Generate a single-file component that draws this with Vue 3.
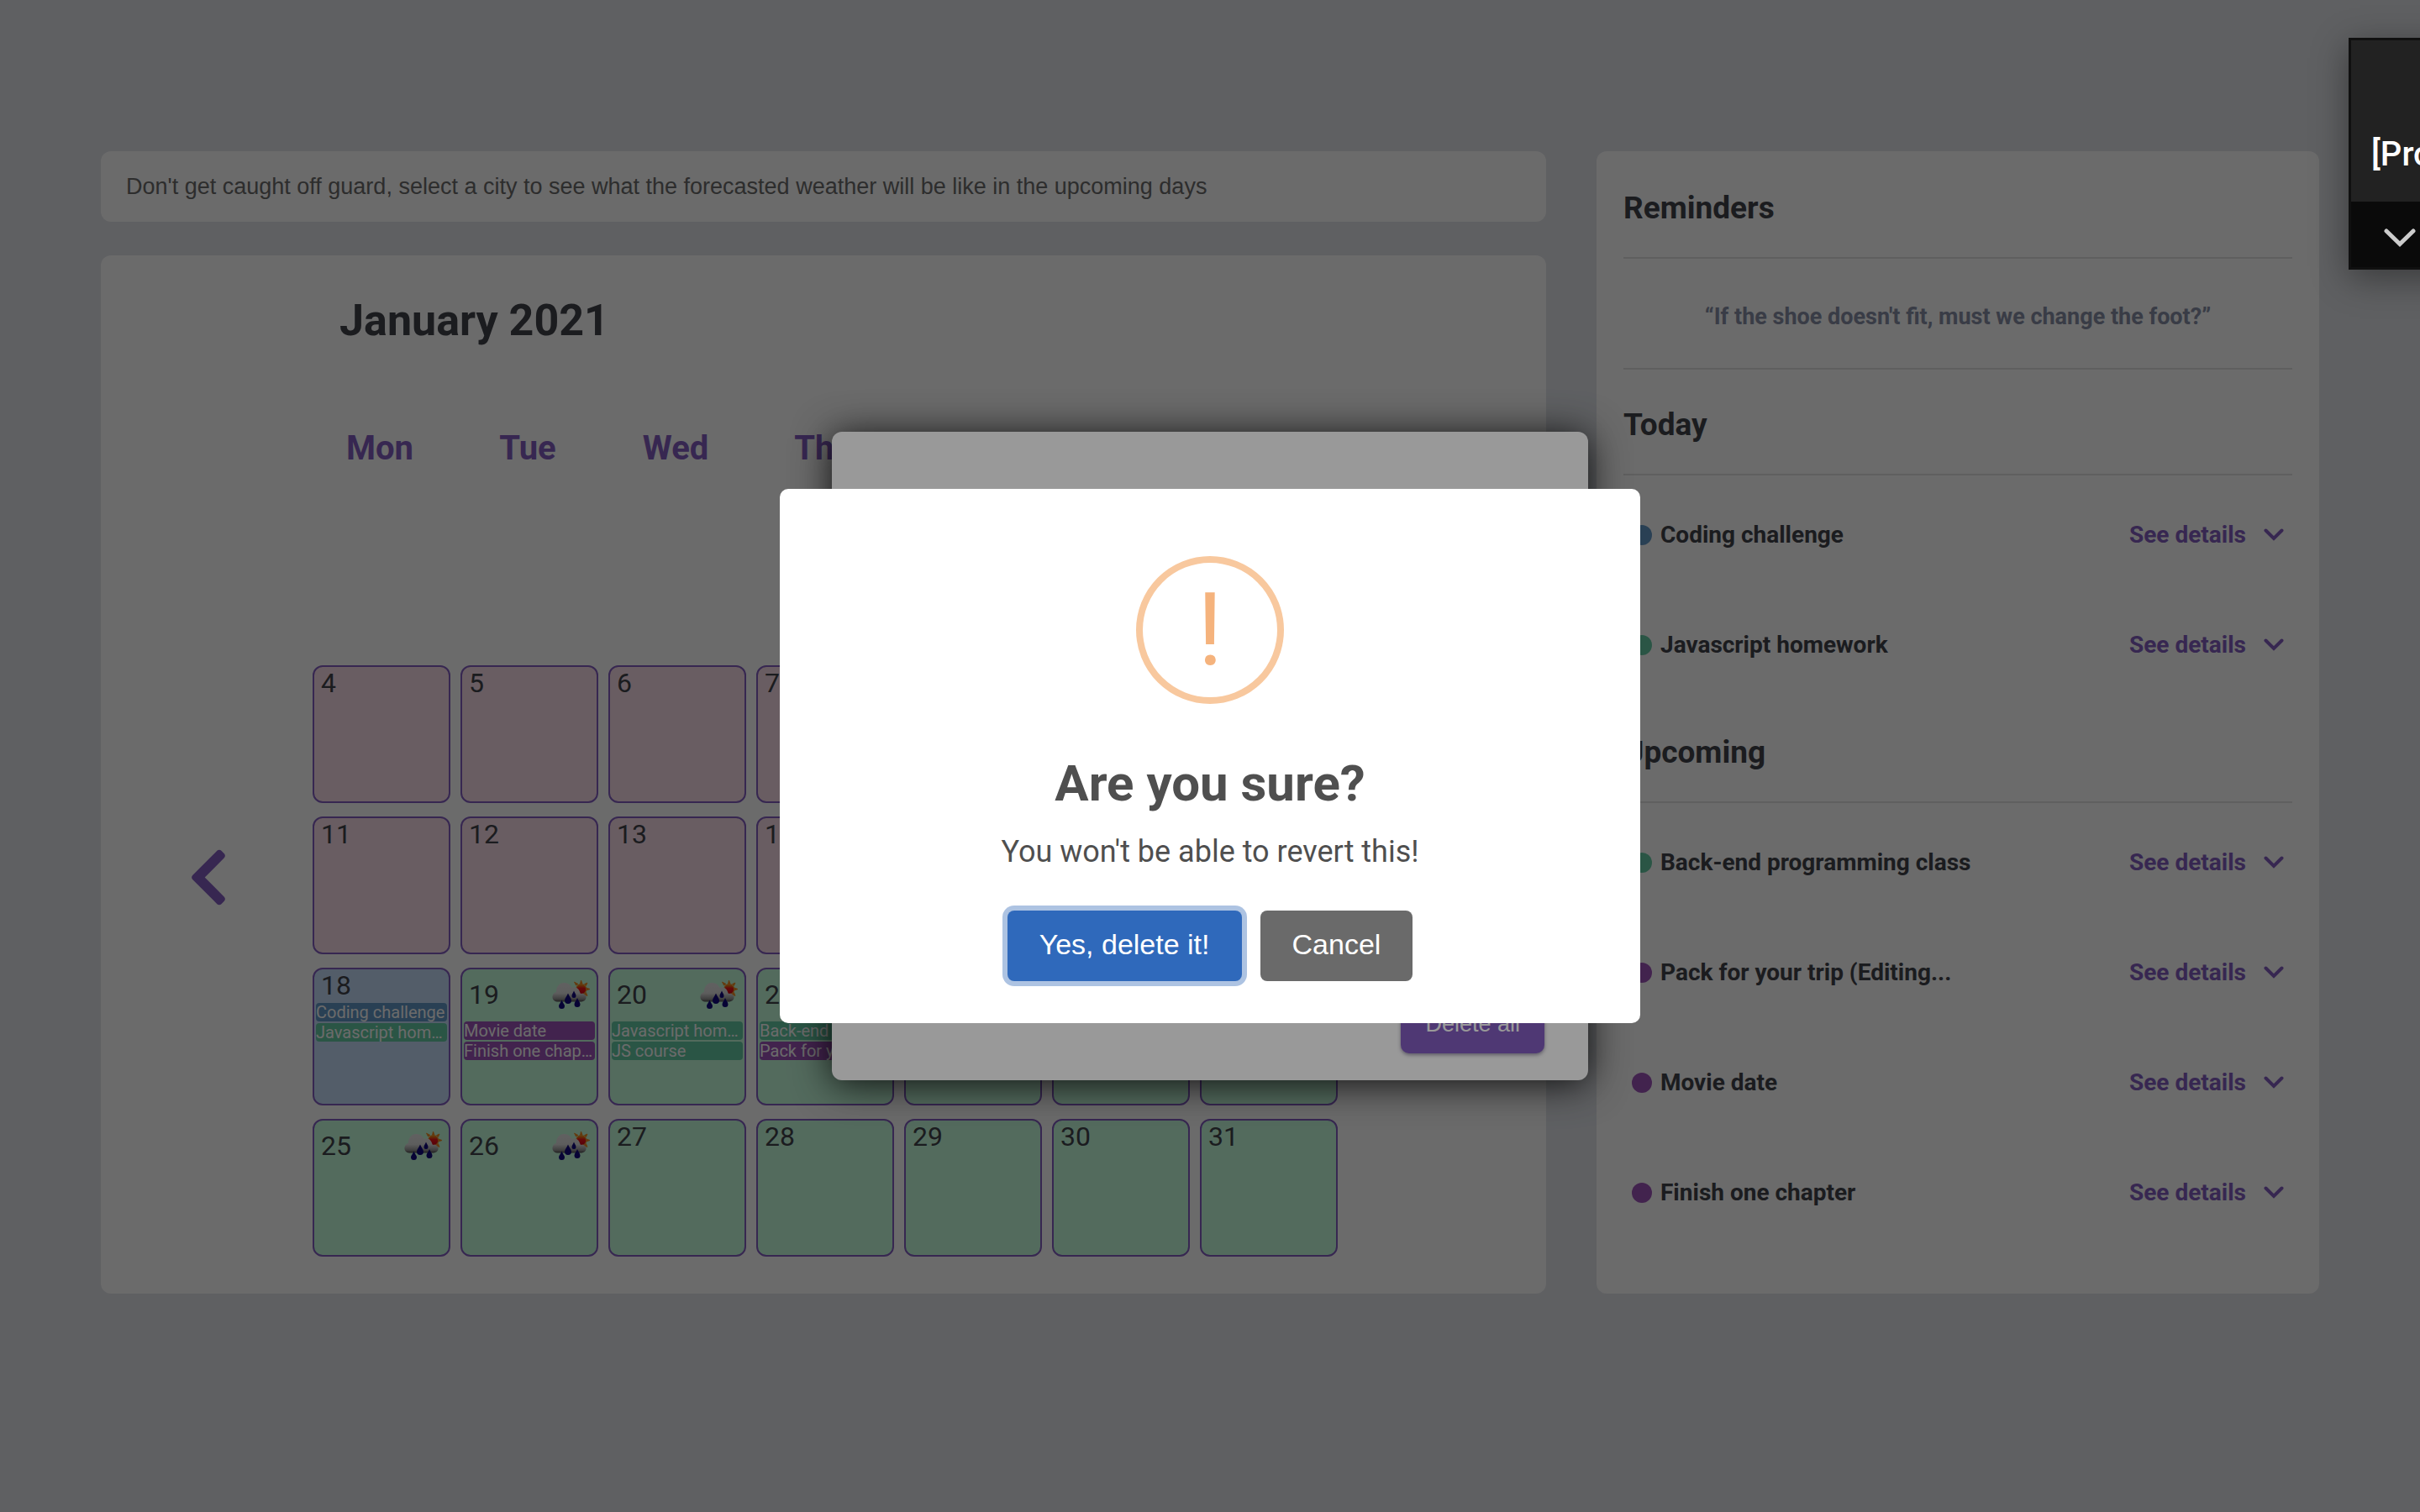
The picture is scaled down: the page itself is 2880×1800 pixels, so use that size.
<script setup>
import { ref } from 'vue'

const weekdays = ['Mon', 'Tue', 'Wed', 'Thu', 'Fri', 'Sat', 'Sun']

const eventsByDay = {
  18: [
    { title: 'Coding challenge', color: 'blue' },
    { title: 'Javascript homework', color: 'green' },
  ],
  19: [
    { title: 'Movie date', color: 'purple' },
    { title: 'Finish one chapter', color: 'purple' },
  ],
  20: [
    { title: 'Javascript homework', color: 'green' },
    { title: 'JS course', color: 'green' },
  ],
  21: [
    { title: 'Back-end programming class', color: 'green' },
    { title: 'Pack for your trip', color: 'purple' },
  ],
}
const rainyDays = [19, 20, 21, 25, 26]
const today = 18

const blanks = 4
const days = Array.from({ length: 31 }, (_, i) => {
  const day = i + 1
  return {
    day,
    state: day < today ? 'past' : day === today ? 'today' : 'future',
    rainy: rainyDays.includes(day),
    events: eventsByDay[day] || [],
  }
})

const sections = ref([
  {
    title: 'Today',
    items: [
      { title: 'Coding challenge', color: 'blue' },
      { title: 'Javascript homework', color: 'green' },
    ],
  },
  {
    title: 'Upcoming',
    items: [
      { title: 'Back-end programming class', color: 'green' },
      { title: 'Pack for your trip (Editing...', color: 'purple' },
      { title: 'Movie date', color: 'purple' },
      { title: 'Finish one chapter', color: 'purple' },
    ],
  },
])
</script>

<template>
  <div class="page">
    <svg class="defs" width="0" height="0" aria-hidden="true">
      <defs>
        <linearGradient id="cloud" x1="0" y1="0" x2="0" y2="1">
          <stop offset="0" stop-color="#e8e8e8" />
          <stop offset="0.55" stop-color="#e0e0e0" />
          <stop offset="0.85" stop-color="#9a9a9a" />
          <stop offset="1" stop-color="#505050" />
        </linearGradient>
        <linearGradient id="sun" x1="0" y1="0" x2="0" y2="1">
          <stop offset="0" stop-color="#f0a010" />
          <stop offset="0.4" stop-color="#f01818" />
          <stop offset="1" stop-color="#d00018" />
        </linearGradient>
        <symbol id="rain" viewBox="0 0 50 50">
          <path
            d="M38.500 12L39.500 8L41 12zM33.500 14L31.500 10L36 12.500zM43.500 12.500L47 11L45.500 14.500zM46 17L50 18.500L46 20zM45.500 22.500L47 26.500L43 25z"
            fill="#f08a20"
            stroke="#f08a20"
            stroke-width="0.800"
          />
          <circle cx="39.700" cy="18.700" r="6" fill="url(#sun)" stroke="#f08a20" stroke-width="1.200" />
          <path
            d="M11 33.500C7 33 5 30 5.500 27C6 24 8 22.500 10 22C10 15 14 11 19 11C23 11 27 13 28.500 17C32 15 36 17 37.500 20.500C38 22 38.500 23 39 24C43 23 46 26 45.500 29C45 32 42 33.500 39 33.500z"
            fill="url(#cloud)"
          />
          <path
            d="M24 23.500C25.500 27 28 29.500 28 32A4 4 0 0 1 20 32C20 29.500 22.500 27 24 23.500zM31 20.500C32 23 33.500 24.500 33.500 26.500A2.500 2.500 0 0 1 28.500 26.500C28.500 24.500 30 23 31 20.500zM16.500 31.500C17.500 34.500 20 36.500 20 38.500A3.500 3.500 0 0 1 13 38.500C13 36.500 15.500 34.500 16.500 31.500zM35 29C36 32 38.500 34 38.500 36.500A3.500 3.500 0 0 1 31.500 36.500C31.500 34 34 32 35 29z"
            fill="#120a80"
          />
        </symbol>
        <symbol id="chevron" viewBox="0 0 320 512">
          <path
            d="M34.520 239.030L228.870 44.690c9.370-9.370 24.570-9.370 33.940 0l22.670 22.670c9.360 9.360 9.370 24.520.040 33.900L131.490 256l154.020 154.750c9.340 9.380 9.320 24.540-.040 33.900l-22.670 22.670c-9.370 9.370-24.570 9.370-33.940 0L34.520 272.970c-9.370-9.370-9.370-24.570 0-33.940z"
            fill="currentColor"
          />
        </symbol>
      </defs>
    </svg>

    <main class="layout">
      <div class="left">
        <section class="card notice">
          <p>Don't get caught off guard, select a city to see what the forecasted weather will be like in the upcoming days</p>
        </section>

        <section class="card calendar">
          <h1>January 2021</h1>
          <div class="weekdays">
            <span v-for="name in weekdays" :key="name">{{ name }}</span>
          </div>
          <button class="nav prev" type="button" aria-label="Previous month">
            <svg width="48" height="77"><use href="#chevron" /></svg>
          </button>
          <div class="days">
            <span v-for="n in blanks" :key="'blank' + n"></span>
            <article v-for="d in days" :key="d.day" class="day" :class="d.state">
              <header :class="{ rainy: d.rainy }">
                <span>{{ d.day }}</span>
                <svg v-if="d.rainy" width="50" height="50"><use href="#rain" /></svg>
              </header>
              <p v-for="e in d.events" :key="e.title" class="event" :class="e.color">{{ e.title }}</p>
            </article>
          </div>
          <button class="nav next" type="button" aria-label="Next month">
            <svg width="48" height="77"><use href="#chevron" /></svg>
          </button>
        </section>
      </div>

      <aside class="card reminders">
        <h2>Reminders</h2>
        <p class="quote">“If the shoe doesn't fit, must we change the foot?”</p>
        <template v-for="s in sections" :key="s.title">
          <h2>{{ s.title }}</h2>
          <ul>
            <li v-for="item in s.items" :key="item.title">
              <span class="dot" :class="item.color"></span>
              <span class="name">{{ item.title }}</span>
              <button class="details" type="button">
                See details
                <svg width="24" height="16" viewBox="0 0 24 16">
                  <path d="M2.500 2.500L12 12L21.500 2.500" />
                </svg>
              </button>
            </li>
          </ul>
        </template>
      </aside>
    </main>

    <div class="overlay day-overlay">
      <div class="day-modal" role="dialog" aria-label="Reminders of the day">
        <button class="delete-all" type="button">Delete all</button>
      </div>
    </div>

    <div class="overlay confirm-overlay">
      <div class="confirm" role="alertdialog" aria-labelledby="confirm-title">
        <div class="warning"><span>!</span></div>
        <h2 id="confirm-title">Are you sure?</h2>
        <p>You won't be able to revert this!</p>
        <div class="actions">
          <button class="yes" type="button">Yes, delete it!</button>
          <button class="no" type="button">Cancel</button>
        </div>
      </div>
    </div>

    <div class="notification">
      <div class="message">[Pro</div>
      <div class="bar">
        <svg width="38" height="22" viewBox="0 0 38 22">
          <path d="M3 3L19 18.500L35 3" />
        </svg>
      </div>
    </div>
  </div>
</template>

<style>
body {
  background: #e3e5eb;
}
</style>

<style scoped>
* {
  box-sizing: border-box;
}

h1,
h2,
p,
ul {
  margin: 0;
  padding: 0;
}

button {
  border: 0;
  padding: 0;
  background: none;
  font-family: "Liberation Sans", Arial, sans-serif;
  cursor: pointer;
}

.page {
  position: relative;
  min-height: 100vh;
  overflow: hidden;
  padding: 180px 120px 40px;
  font-family: Roboto, sans-serif;
  color: #43454d;
}

.defs {
  position: absolute;
}

.layout {
  display: grid;
  grid-template-columns: 2fr 1fr;
  gap: 60px;
}

.left {
  display: flex;
  flex-direction: column;
  gap: 40px;
  min-width: 0;
}

.card {
  background: #fff;
  border-radius: 12px;
}

.notice {
  padding: 26px 30px;
  font-family: "Liberation Sans", Arial, sans-serif;
  font-size: 27px;
  line-height: 32px;
  color: #6e6e6e;
}

.calendar {
  display: grid;
  grid-template-columns: 1fr minmax(0, 1232px) 1fr;
  padding: 48px 0 36px;
}

.calendar h1 {
  grid-column: 2;
  padding-left: 40px;
  font-size: 52px;
  line-height: 60px;
  font-weight: 700;
}

.weekdays {
  grid-column: 2;
  display: grid;
  grid-template-columns: repeat(7, 1fr);
  margin: 98px 0 46px;
  font-size: 40px;
  line-height: 48px;
  font-weight: 700;
  text-align: center;
  color: #845ec2;
}

.nav {
  display: flex;
  align-items: center;
  justify-content: center;
  padding-bottom: 20px;
  color: #845ec2;
}

.prev {
  grid-column: 1;
  padding-left: 12px;
}

.next {
  padding-right: 12px;
}

.next svg {
  transform: scaleX(-1);
}

.days {
  display: grid;
  grid-template-columns: repeat(7, 1fr);
}

.day {
  height: 164px;
  margin: 8px 4px 8px 8px;
  padding: 0 2px;
  border: 2px solid #845ec2;
  border-radius: 12px;
  overflow: hidden;
}

.past {
  background: #fce0ea;
}

.today {
  background: #c8e0fc;
}

.future {
  background: #c8ffe0;
}

.day header {
  display: flex;
  align-items: center;
  justify-content: space-between;
  height: 38px;
  padding: 0 6px;
  font-size: 32px;
}

.day header.rainy {
  height: 60px;
}

.event {
  height: 22px;
  margin-top: 2px;
  border-radius: 4px;
  overflow: hidden;
  font-size: 20px;
  line-height: 22px;
  text-overflow: ellipsis;
  white-space: nowrap;
  color: #fff;
}

.blue {
  background: #649aca;
}

.green {
  background: #66cca6;
}

.purple {
  background: #a055bb;
}

.reminders {
  padding: 2px 32px 44px;
}

.reminders h2 {
  padding: 44px 0 36px;
  border-bottom: 2px solid #e2e2e2;
  font-size: 37px;
  line-height: 44px;
  font-weight: 700;
}

.quote {
  padding: 53px 0 45px;
  border-bottom: 2px solid #e2e2e2;
  font-size: 27px;
  line-height: 32px;
  font-weight: 700;
  text-align: center;
  color: #8a91a8;
}

.reminders ul {
  padding-top: 2px;
  list-style: none;
}

.reminders li {
  display: flex;
  align-items: center;
  height: 131px;
  padding: 7px 10px 0;
}

.dot {
  width: 24px;
  height: 24px;
  margin-right: 10px;
  border-radius: 50%;
}

.name {
  flex: 1;
  font-size: 28px;
  line-height: 32px;
  font-weight: 700;
}

.details {
  display: flex;
  align-items: center;
  gap: 21px;
  font-family: Roboto, sans-serif;
  font-size: 28px;
  line-height: 32px;
  font-weight: 700;
  color: #845ec2;
}

.details path {
  fill: none;
  stroke: #845ec2;
  stroke-width: 4;
  stroke-linecap: round;
}

.overlay {
  position: absolute;
  inset: 0;
  display: flex;
  align-items: center;
  justify-content: center;
}

.day-overlay {
  background: rgba(0, 0, 0, 0.3);
}

.day-modal {
  display: flex;
  align-items: flex-end;
  justify-content: flex-end;
  width: 900px;
  min-height: 772px;
  padding: 32px 52px;
  border-radius: 12px;
  background: #fff;
  box-shadow: 0 4px 46px rgba(0, 0, 0, 0.85);
}

.delete-all {
  height: 70px;
  padding: 0 29px;
  border-radius: 10px;
  background: #845ec2;
  box-shadow: 0 2px 4px rgba(60, 50, 90, 0.5);
  font-size: 27px;
  color: #fff;
}

.confirm-overlay {
  background: rgba(0, 0, 0, 0.4);
}

.confirm {
  display: flex;
  flex-direction: column;
  align-items: center;
  width: 1024px;
  padding: 80px 40px 50px;
  border-radius: 10px;
  background: #fff;
  color: #4f4f4f;
}

.warning {
  display: flex;
  align-items: center;
  justify-content: center;
  width: 176px;
  height: 176px;
  border: 8px solid #f8c89e;
  border-radius: 50%;
  font-size: 120px;
  line-height: 160px;
  color: #f5b37d;
}

.confirm h2 {
  margin-top: 60px;
  font-size: 60px;
  line-height: 70px;
  font-weight: 700;
}

.confirm p {
  margin-top: 24px;
  font-size: 36px;
  line-height: 44px;
}

.actions {
  display: flex;
  gap: 22px;
  margin-top: 48px;
}

.actions button {
  height: 84px;
  padding: 0 38px 3px;
  border-radius: 8px;
  font-size: 34px;
  color: #fff;
}

.actions .yes {
  background: #2f69bb;
  box-shadow: 0 0 0 6px #adc3e2;
}

.actions .no {
  background: #6a6a6a;
}

.notification {
  position: absolute;
  top: 45px;
  right: -635px;
  width: 720px;
  border: 3px solid #101010;
  background: #222;
  box-shadow: 0 10px 40px rgba(0, 0, 0, 0.4);
}

.message {
  padding: 112px 24px 32px;
  font-size: 40px;
  line-height: 48px;
  font-weight: 500;
  color: #fff;
}

.bar {
  height: 78px;
  padding: 32px 39px 0;
  background: #0a0a0a;
}

.bar svg {
  display: block;
}

.bar path {
  fill: none;
  stroke: #ccc;
  stroke-width: 5;
  stroke-linecap: round;
}
</style>
